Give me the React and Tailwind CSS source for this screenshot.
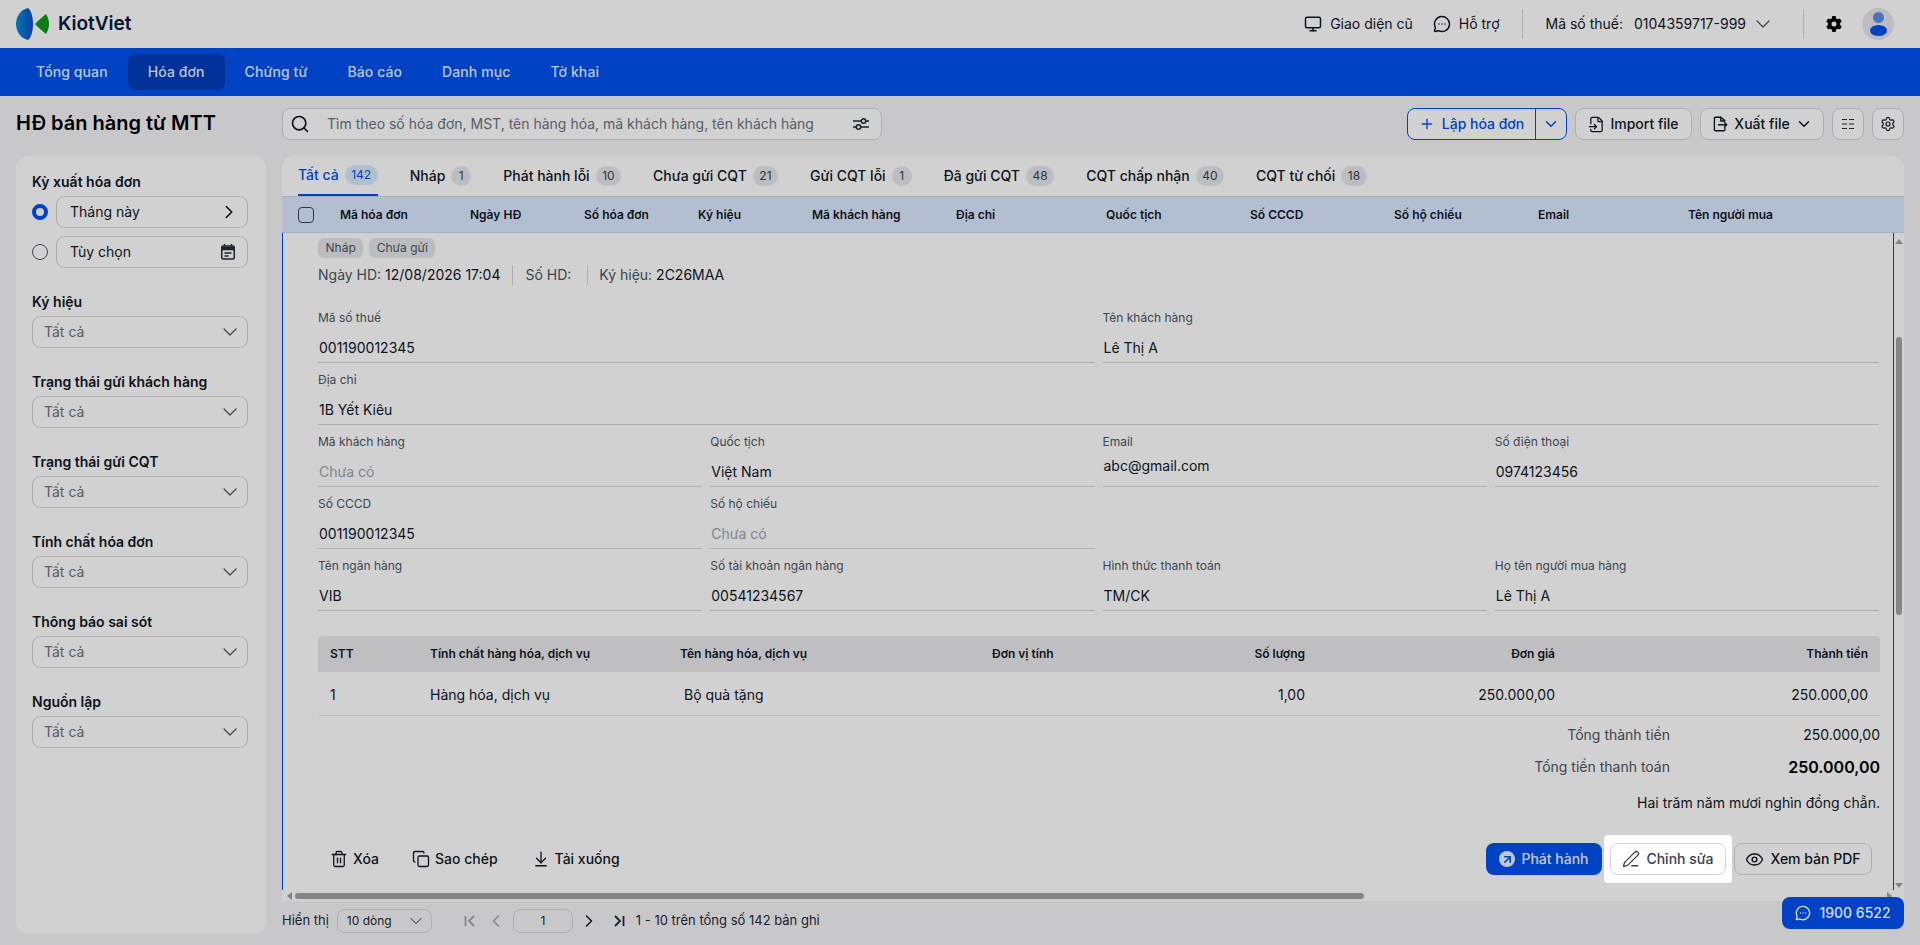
import { Search, Plus, ChevronDown, ChevronRight, ChevronLeft, Monitor, MessageCircleMore, Settings, Trash2, Copy, ArrowDownToLine, PenLine, Eye, FileInput, ArrowUpRight } from 'lucide-react'
import { FaGear } from 'react-icons/fa6'

const tabs = [
  ['Tất cả', 142], ['Nháp', 1], ['Phát hành lỗi', 10], ['Chưa gửi CQT', 21], ['Gửi CQT lỗi', 1],
  ['Đã gửi CQT', 48], ['CQT chấp nhận', 40], ['CQT từ chối', 18],
]
const columns = [
  ['Mã hóa đơn', 'w-[130px]'], ['Ngày HĐ', 'w-[114px]'], ['Số hóa đơn', 'w-[114px]'], ['Ký hiệu', 'w-[114px]'],
  ['Mã khách hàng', 'w-[144px]'], ['Địa chỉ', 'w-[150px]'], ['Quốc tịch', 'w-[144px]'], ['Số CCCD', 'w-[144px]'],
  ['Số hộ chiếu', 'w-[144px]'], ['Email', 'w-[150px]'], ['Tên người mua', 'w-[150px]'],
]
const filters = ['Ký hiệu', 'Trạng thái gửi khách hàng', 'Trạng thái gửi CQT', 'Tính chất hóa đơn', 'Thông báo sai sót', 'Nguồn lập']

function Field({ label, value, muted, raised, className = '' }) {
  return (
    <div className={`h-[62px] ${className}`}>
      <div className="h-[15px] text-xs leading-[15px] text-[#4b5563]">{label}</div>
      <div className={`flex h-[38px] border-b border-[#d1d5db] pl-px text-sm ${raised ? 'items-start pt-[7px]' : 'items-center pt-[9px]'} ${muted ? 'text-[#9ca3af]' : 'text-[#111827]'}`}>{value}</div>
    </div>
  )
}

function Logo() {
  return (
    <svg width="33" height="32" viewBox="0 0 33 32" className="shrink-0">
      <defs>
        <linearGradient id="kv" x1="0" x2="1" y1="0" y2="0">
          <stop offset="0" stopColor="#0a8ee0" />
          <stop offset="1" stopColor="#0f4fc0" />
        </linearGradient>
      </defs>
      <path d="M12 0C4 2 0 9 0 16s4 14 12 16c3-2 5-9 5-16S15 2 12 0Z" fill="url(#kv)" />
      <path d="M30 6c2 3 3 7 3 10s-1 7-3 10c-4-3-8-7-11-10 3-3 7-7 11-10Z" fill="#0a9a1e" />
    </svg>
  )
}

function SelectBox({ label }) {
  return (
    <div className="mb-6">
      <div className="mb-1 text-sm font-semibold leading-5 text-[#111827]">{label}</div>
      <div className="flex h-8 items-center justify-between rounded-lg border border-[#d1d5db] pl-[11px] pr-[5px] text-sm text-[#6b7280]">
        <span>Tất cả</span>
        <ChevronDown size={24} strokeWidth={1.25} className="text-[#4b5563]" />
      </div>
    </div>
  )
}

function App() {
  return (
    <div className="flex h-[945px] w-full flex-col overflow-hidden bg-[#f4f5f8] font-['Inter',sans-serif] text-[#111827]">
      <header className="flex h-12 shrink-0 items-center justify-between bg-white pl-4 pr-[26px]">
        <div className="flex items-center gap-[9px]">
          <Logo />
          <span className="text-[19px] font-semibold text-[#0b1c3f]">KiotViet</span>
        </div>
        <div className="flex items-center text-sm">
          <Monitor size={18} strokeWidth={2} />
          <span className="ml-2">Giao diện cũ</span>
          <MessageCircleMore size={18} strokeWidth={2} className="ml-5" />
          <span className="ml-2">Hỗ trợ</span>
          <div className="ml-[22px] h-[30px] w-px bg-[#d1d5db]" />
          <span className="ml-[23px]">Mã số thuế:</span>
          <span className="ml-[11px]">0104359717-999</span>
          <ChevronDown size={24} strokeWidth={1.25} className="ml-[5px] text-[#4b5563]" />
          <div className="ml-7 h-[30px] w-px bg-[#d1d5db]" />
          <FaGear size={16} className="ml-[22px] text-black" />
          <div className="ml-5 flex h-8 w-8 flex-col items-center justify-center rounded-full bg-[#e5e7eb]">
            <div className="h-[11px] w-[11px] rounded-full bg-[#5b8fe0]" />
            <div className="mt-0.5 h-[11px] w-[17px] rounded-[50%] bg-[#0051f0]" />
          </div>
        </div>
      </header>

      <nav className="flex h-12 shrink-0 items-center bg-[#0051f0] px-4 text-sm font-medium tracking-[0.1px] text-[#e5edff]">
        {['Tổng quan', 'Hóa đơn', 'Chứng từ', 'Báo cáo', 'Danh mục', 'Tờ khai'].map((item, idx) => (
          <div key={item} className={`flex h-9 items-center rounded-lg px-5 ${idx === 1 ? 'bg-[#003dbb]' : ''}`}>{item}</div>
        ))}
      </nav>

      <div className="flex flex-1 gap-4 px-4 pt-3">
        <aside className="w-[250px] shrink-0">
          <h1 className="mt-[1px] h-[35px] text-xl font-semibold leading-7 text-black">HĐ bán hàng từ MTT</h1>
          <div className="mt-[12px] h-[778px] rounded-xl bg-white pl-4 pr-[18px] pt-4">
            <div className="text-sm font-semibold leading-5">Kỳ xuất hóa đơn</div>
            <div className="mt-1 flex items-center gap-2">
              <div className="h-4 w-4 rounded-full border-[4px] border-[#0051f0] bg-white" />
              <div className="flex h-8 flex-1 items-center justify-between rounded-lg border border-[#d1d5db] pl-[13px] pr-[7px] text-sm">
                <span>Tháng này</span>
                <ChevronRight size={22} strokeWidth={1.75} />
              </div>
            </div>
            <div className="mt-2 flex items-center gap-2">
              <div className="h-4 w-4 rounded-full border border-[#4b5563]" />
              <div className="flex h-8 flex-1 items-center justify-between rounded-lg border border-[#d1d5db] pl-[13px] pr-[12px] text-sm">
                <span>Tùy chọn</span>
                <svg width="14" height="16" viewBox="0 0 14 16" fill="none" stroke="#1f2937" strokeWidth="1.5">
                  <rect x="0.75" y="2" width="12.5" height="13" rx="1.5" />
                  <path d="M1 3.5h12v2H1z" fill="#1f2937" />
                  <path d="M3.5 0v2M10.5 0v2M3.5 9h7M3.5 12h4" />
                </svg>
              </div>
            </div>
            <div className="mt-6">
              {filters.map((label) => <SelectBox key={label} label={label} />)}
            </div>
          </div>
        </aside>

        <main className="flex min-w-0 flex-1 flex-col">
          <div className="flex h-8 shrink-0 items-center justify-between">
            <div className="flex h-8 w-[600px] items-center rounded-lg border border-[#d1d5db] bg-white pl-[7px] pr-[11px] text-sm">
              <Search size={20} strokeWidth={2} className="shrink-0 text-[#111827]" />
              <span className="ml-[17px] flex-1 text-[#6b7280]">Tìm theo số hóa đơn, MST, tên hàng hóa, mã khách hàng, tên khách hàng</span>
              <svg width="18" height="14" viewBox="0 0 18 14" fill="none" stroke="#1f2937" strokeWidth="1.5">
                <path d="M1 4h8M14 4h3M1 10h3M9 10h8" />
                <circle cx="11.5" cy="4" r="2.25" />
                <circle cx="6.5" cy="10" r="2.25" />
              </svg>
            </div>
            <div className="flex items-center gap-2 text-sm font-medium">
              <div className="flex h-8 w-[160px] items-center rounded-lg border border-[#0051f0] bg-white text-[#0051f0]">
                <div className="flex flex-1 items-center justify-center gap-[7px]"><Plus size={16} strokeWidth={2} />Lập hóa đơn</div>
                <div className="flex h-full w-[31px] items-center justify-center border-l border-[#0051f0]"><ChevronDown size={18} strokeWidth={2} /></div>
              </div>
              <div className="flex h-8 w-[117px] items-center justify-center gap-[5px] rounded-lg border border-[#d1d5db] bg-white"><FileInput size={17} strokeWidth={1.75} />Import file</div>
              <div className="flex h-8 w-[124px] items-center justify-center gap-[5px] rounded-lg border border-[#d1d5db] bg-white">
                <svg width="18" height="18" viewBox="0 0 24 24" fill="none" stroke="currentColor" strokeWidth="1.8" strokeLinejoin="round" strokeLinecap="round">
                  <path d="M13 3H6a1.5 1.5 0 0 0-1.5 1.5v15A1.5 1.5 0 0 0 6 21h11a1.5 1.5 0 0 0 1.5-1.5V17" />
                  <path d="M13 3v5h5.5V7.5z" />
                  <path d="M10 13h11M18 10l3 3-3 3" />
                </svg>
                Xuất file
                <ChevronDown size={18} strokeWidth={2} />
              </div>
              <div className="flex h-8 w-8 items-center justify-center rounded-lg border border-[#d1d5db] bg-white">
                <svg width="14" height="14" viewBox="0 0 14 14" stroke="#1f2937" strokeWidth="1.2"><path d="M1 2.5h5M8 2.5h5M1 7h5M8 7h5M1 11.5h5M8 11.5h5" /></svg>
              </div>
              <div className="flex h-8 w-8 items-center justify-center rounded-lg border border-[#d1d5db] bg-white"><Settings size={16} strokeWidth={1.75} /></div>
            </div>
          </div>

          <section className="mt-4 flex h-[745px] flex-col rounded-t-xl bg-white">
            <div className="flex h-[41px] shrink-0 items-center gap-8 border-b border-[#d1d5db] pl-4 text-sm font-medium">
              {tabs.map(([name, count], idx) => (
                <div key={name} className={`flex h-10 items-center gap-1.5 ${idx === 0 ? 'border-b-2 border-[#0051f0] text-[#0051f0]' : ''}`}>
                  <span>{name}</span>
                  <span className={`flex h-5 min-w-5 items-center justify-center rounded-full px-[6.5px] text-xs font-normal ${idx === 0 ? 'bg-[#dbeafe]' : 'bg-[#e5e7eb] text-[#374151]'}`}>{count}</span>
                </div>
              ))}
            </div>

            <div className="flex h-9 shrink-0 items-center border-b border-[#bfdbfe] bg-[#dbeafe] pl-4 text-xs font-semibold">
              <div className="h-4 w-4 rounded-[4px] border border-[#374151]" />
              <div className="ml-[26px] flex">
                {columns.map(([name, w]) => <div key={name} className={w}>{name}</div>)}
              </div>
            </div>

            <div className="flex min-h-0 flex-1">
              <div className="flex h-[657px] w-[612px] flex-1 flex-col border-x border-[#0051f0] pl-[35px] pr-[13px] pt-[5px]">
                <div className="flex gap-1.5 text-xs text-[#4b5563]">
                  <span className="flex h-5 items-center rounded-md bg-[#e5e7eb] px-[7.5px]">Nháp</span>
                  <span className="flex h-5 items-center rounded-md bg-[#e5e7eb] px-[7.5px]">Chưa gửi</span>
                </div>
                <div className="mt-[7px] flex h-5 items-center text-sm text-[#4b5563]">
                  <span>Ngày HD: <span className="text-[#111827]">12/08/2026 17:04</span></span>
                  <div className="mx-3 h-5 w-px bg-[#d1d5db]" />
                  <span>Số HD:</span>
                  <div className="ml-4 mr-[11px] h-5 w-px bg-[#d1d5db]" />
                  <span>Ký hiệu: <span className="text-[#111827]">2C26MAA</span></span>
                </div>

                <div className="mr-px mt-[25px] grid grid-cols-4 gap-x-2">
                  <Field className="col-span-2" label="Mã số thuế" value="001190012345" />
                  <Field className="col-span-2" label="Tên khách hàng" value="Lê Thị A" />
                  <Field className="col-span-4" label="Địa chỉ" value="1B Yết Kiêu" />
                  <Field label="Mã khách hàng" value="Chưa có" muted />
                  <Field label="Quốc tịch" value="Việt Nam" />
                  <Field label="Email" value="abc@gmail.com" raised />
                  <Field label="Số điện thoại" value="0974123456" />
                  <Field label="Số CCCD" value="001190012345" />
                  <Field label="Số hộ chiếu" value="Chưa có" muted />
                  <div />
                  <div />
                  <Field label="Tên ngân hàng" value="VIB" />
                  <Field label="Số tài khoản ngân hàng" value="00541234567" />
                  <Field label="Hình thức thanh toán" value="TM/CK" />
                  <Field label="Họ tên người mua hàng" value="Lê Thị A" />
                </div>

                <div className="mt-4 flex h-9 items-center rounded-t bg-[#e9eaed] px-3 text-xs font-semibold">
                  <div className="w-[100px]">STT</div>
                  <div className="w-[250px]">Tính chất hàng hóa, dịch vụ</div>
                  <div className="w-[312px]">Tên hàng hóa, dịch vụ</div>
                  <div className="w-[120px]">Đơn vị tính</div>
                  <div className="w-[193px] text-right">Số lượng</div>
                  <div className="w-[250px] text-right">Đơn giá</div>
                  <div className="flex-1 text-right">Thành tiền</div>
                </div>
                <div className="flex h-11 items-center border-b border-[#e5e7eb] px-3 pt-0.5 text-sm">
                  <div className="w-[100px]">1</div>
                  <div className="w-[254px]">Hàng hóa, dịch vụ</div>
                  <div className="w-[308px]">Bộ quà tặng</div>
                  <div className="w-[120px]" />
                  <div className="w-[193px] text-right">1,00</div>
                  <div className="w-[250px] text-right">250.000,00</div>
                  <div className="flex-1 text-right">250.000,00</div>
                </div>

                <div className="mt-[9px] flex h-5 items-center justify-end text-sm">
                  <span className="text-[#4b5563]">Tổng thành tiền</span>
                  <span className="w-[210px] text-right">250.000,00</span>
                </div>
                <div className="mt-3 flex h-5 items-center justify-end text-sm">
                  <span className="text-[#4b5563]">Tổng tiền thanh toán</span>
                  <span className="w-[210px] text-right text-base font-semibold text-black">250.000,00</span>
                </div>
                <div className="mt-4 text-right text-sm leading-5">Hai trăm năm mươi nghìn đồng chẵn.</div>

                <div className="mt-[30px] flex h-8 items-center justify-between pl-3 pr-[8px] text-sm font-medium">
                  <div className="flex items-center">
                    <Trash2 size={18} strokeWidth={1.75} />
                    <span className="ml-[5px]">Xóa</span>
                    <Copy size={18} strokeWidth={1.75} className="ml-[33px]" />
                    <span className="ml-[5px]">Sao chép</span>
                    <ArrowDownToLine size={18} strokeWidth={1.75} className="ml-[34px]" />
                    <span className="ml-[5px]">Tải xuống</span>
                  </div>
                  <div className="flex items-center gap-2">
                    <div className="flex h-8 w-[116px] items-center justify-center gap-[6px] rounded-lg bg-[#0051f0] text-[#eef3ff]">
                      <span className="flex h-4 w-4 items-center justify-center rounded-full bg-[#eef3ff] text-[#0051f0]"><ArrowUpRight size={13} strokeWidth={3} /></span>
                      Phát hành
                    </div>
                    <div className="relative z-50 -mx-1.5 -my-2 rounded-sm bg-white px-1.5 py-2">
                      <div className="flex h-8 w-[116px] items-center justify-center gap-[6px] rounded-lg border border-[#d1d5db] bg-white text-[#374151]">
                        <PenLine size={18} strokeWidth={1.75} />
                        Chỉnh sửa
                      </div>
                    </div>
                    <div className="flex h-8 w-[138px] items-center justify-center gap-[6px] rounded-lg border border-[#d1d5db]">
                      <Eye size={19} strokeWidth={1.75} />
                      Xem bản PDF
                    </div>
                  </div>
                </div>
              </div>

              <div className="flex w-2.5 shrink-0 flex-col items-center bg-white">
                <div className="mt-1.5 h-0 w-0 border-x-[4px] border-b-[5px] border-x-transparent border-b-[#9ca3af]" />
                <div className="mt-[93px] h-[278px] w-1.5 rounded-full bg-[#a3a3a3]" />
                <div className="mt-[268px] h-0 w-0 border-x-[4px] border-t-[5px] border-x-transparent border-t-[#9ca3af]" />
              </div>
            </div>

            <div className="flex h-2.5 items-center pl-[5px] pr-[12px]">
              <div className="h-0 w-0 border-y-[4px] border-r-[5px] border-y-transparent border-r-[#9ca3af]" />
              <div className="ml-[3px] h-1.5 w-[1069px] rounded-full bg-[#a3a3a3]" />
              <div className="ml-auto h-0 w-0 border-y-[4px] border-l-[5px] border-y-transparent border-l-[#9ca3af]" />
            </div>
          </section>

          <div className="flex h-10 items-center text-[13px] text-[#1f2937]">
            <span>Hiển thị</span>
            <div className="ml-2 flex h-6 w-[95px] items-center justify-between rounded-lg border border-[#d1d5db] pl-[9px] pr-[5px] text-xs">
              <span>10 dòng</span>
              <ChevronDown size={20} strokeWidth={1.25} className="text-[#4b5563]" />
            </div>
            <svg width="16" height="16" viewBox="0 0 16 16" fill="none" stroke="#9ca3af" strokeWidth="1.8" className="ml-[30px]"><path d="M12 3L7 8l5 5M3.5 3v10" /></svg>
            <ChevronLeft size={20} strokeWidth={2} className="ml-2 text-[#9ca3af]" />
            <div className="ml-[7px] flex h-6 w-[60px] items-center justify-center rounded-lg border border-[#d1d5db] text-xs">1</div>
            <ChevronRight size={20} strokeWidth={2} className="ml-[6px]" />
            <svg width="16" height="16" viewBox="0 0 16 16" fill="none" stroke="#1f2937" strokeWidth="1.8" className="ml-[12px]"><path d="M4 3l5 5-5 5M12.5 3v10" /></svg>
            <span className="ml-[9px]">1 - 10 trên tổng số 142 bản ghi</span>
          </div>
        </main>
      </div>

      <div className="absolute inset-0 z-40 h-[945px] bg-black/18" />

      <div className="absolute left-[1782px] top-[897px] z-50 flex h-8 w-[122px] items-center justify-center gap-2 rounded-lg bg-[#0042c5] text-sm font-medium text-[#d6dff2]">
        <MessageCircleMore size={16} strokeWidth={2} />
        1900 6522
      </div>
    </div>
  )
}

export default App
